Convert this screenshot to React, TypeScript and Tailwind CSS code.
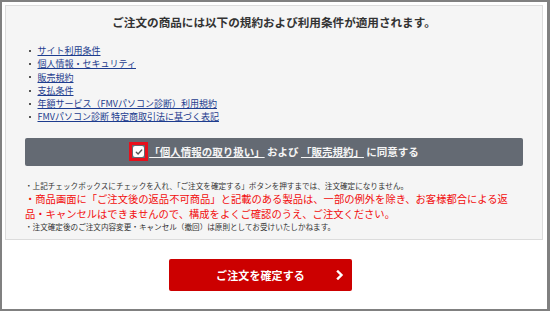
export default function App() {
  const links = [
    'サイト利用条件',
    '個人情報・セキュリティ',
    '販売規約',
    '支払条件',
    '年額サービス（FMVパソコン診断）利用規約',
    'FMVパソコン診断 特定商取引法に基づく表記',
  ];

  return (
    <div
      className="w-[550px] h-[311px] bg-white border-2 border-r-[3px] border-[#808080] overflow-hidden"
      style={{ fontFamily: '"Noto Sans CJK JP", "Noto Sans", sans-serif' }}
    >
      {/* Terms panel */}
      <div className="ml-[3px] mt-[3px] w-[538px] bg-[#f5f5f5] border border-[#dcdcdc] pt-[8px] pb-[8px]">
        <h1 className="text-center text-[11.6px] leading-[16px] font-bold text-[#333]">
          ご注文の商品には以下の規約および利用条件が適用されます。
        </h1>

        <ul className="mt-[14px]">
          {links.map((l) => (
            <li key={l} className="flex items-center text-[9px] leading-[13.3px]">
              <span className="ml-[22.5px] mr-[7px] w-[2px] h-[2px] bg-[#555]"></span>
              <a href="#" className="text-[#1d3c8e] underline">{l}</a>
            </li>
          ))}
        </ul>

        {/* Agreement bar */}
        <div className="mt-[14px] mx-[19px] h-[28px] bg-[#646a73] rounded-[2px] flex items-center justify-center">
          <div className="w-[19px] h-[19px] border-[3px] border-[#e8101c] bg-[#646a73] flex items-center justify-center mr-[1px]">
            <div className="w-[11px] h-[11px] bg-white rounded-[2px] flex items-center justify-center">
              <svg width="8" height="8" viewBox="0 0 8 8" fill="none">
                <path d="M1.3 4.2 L3.1 5.9 L6.7 2.1" stroke="#555" strokeWidth="1.4" strokeLinecap="round" strokeLinejoin="round" />
              </svg>
            </div>
          </div>
          <p className="text-[10.5px] font-bold text-[#f5f5f5] leading-[14px] whitespace-nowrap">
            <span className="underline">「個人情報の取り扱い」</span> および <span className="underline">「販売規約」</span> に同意する
          </p>
        </div>

        {/* Notes */}
        <div className="mx-[19px] mt-[15px]">
          <p className="text-[7.6px] leading-[10px] text-[#333] whitespace-nowrap">
            ・上記チェックボックスにチェックを入れ、「ご注文を確定する」ボタンを押すまでは、注文確定になりません。
          </p>
          <p className="text-[10.3px] leading-[15.5px] text-[#f20d0d] whitespace-nowrap">
            ・商品画面に「ご注文後の返品不可商品」と記載のある製品は、一部の例外を除き、お客様都合による返
            <br />
            品・キャンセルはできませんので、構成をよくご確認のうえ、ご注文ください。
          </p>
          <p className="text-[7.6px] leading-[9px] text-[#333] whitespace-nowrap">
            ・注文確定後のご注文内容変更・キャンセル（撤回）は原則としてお受けいたしかねます。
          </p>
        </div>
      </div>

      {/* Confirm button */}
      <div className="mt-[19px] pl-[167px]">
        <button className="relative w-[183px] h-[32px] bg-[#cc0000] rounded-[2px] flex items-center justify-center">
          <span className="text-[11px] font-bold text-white tracking-[0.1px]">ご注文を確定する</span>
          <svg className="absolute right-[8px] top-1/2 -translate-y-1/2" width="8" height="10" viewBox="0 0 8 10" fill="none">
            <path d="M2 1.5 L5.5 5 L2 8.5" stroke="white" strokeWidth="2.4" strokeLinecap="square" />
          </svg>
        </button>
      </div>
    </div>
  );
}
